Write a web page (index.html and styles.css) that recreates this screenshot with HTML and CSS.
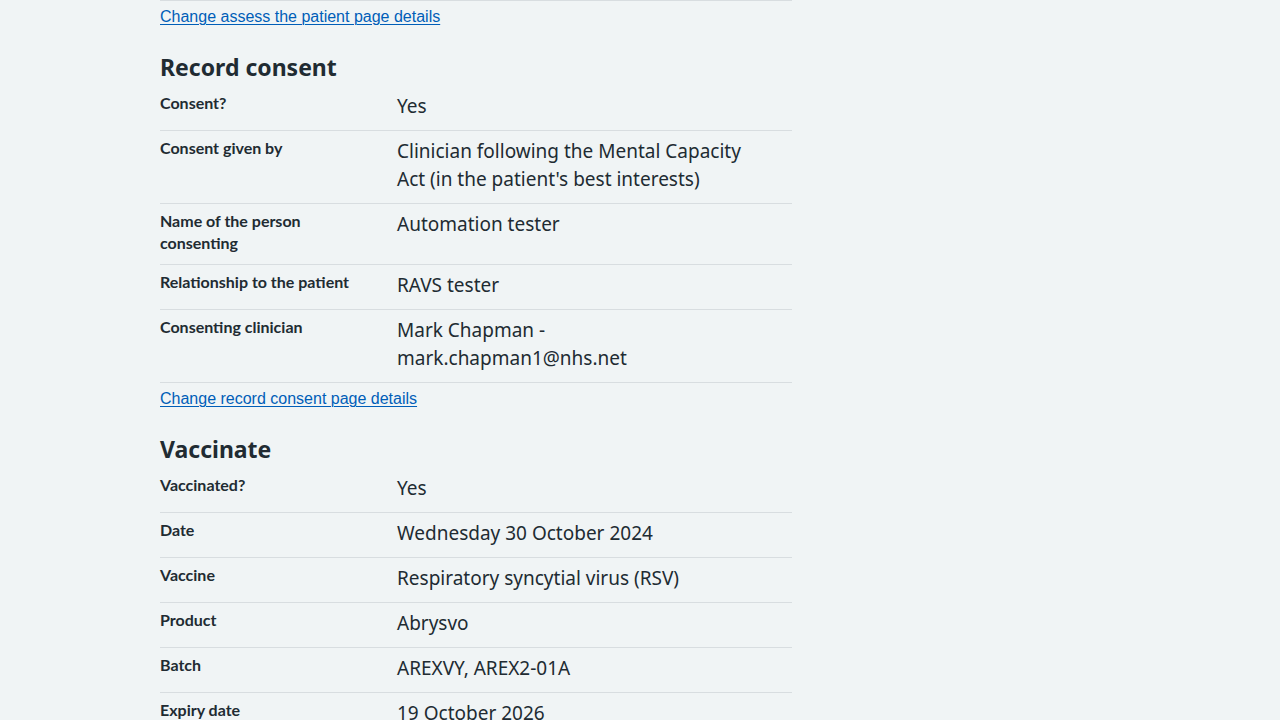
FILE: index.html
```html
<!DOCTYPE html>
<html lang="en">
<head>
<meta charset="utf-8">
<title>Check and confirm</title>
<link rel="stylesheet" href="styles.css">
</head>
<body>
<main class="page">
  <div class="section">
    <div class="top-rule"></div>
    <a class="change-link" href="#">Change assess the patient page details</a>
  </div>

  <section class="section">
    <h2 class="section-title">Record consent</h2>
    <dl class="summary">
      <div class="row"><dt class="key">Consent?</dt><dd class="value">Yes</dd></div>
      <div class="row"><dt class="key">Consent given by</dt><dd class="value">Clinician following the Mental Capacity Act (in the patient's best interests)</dd></div>
      <div class="row"><dt class="key">Name of the person consenting</dt><dd class="value">Automation tester</dd></div>
      <div class="row"><dt class="key">Relationship to the patient</dt><dd class="value">RAVS tester</dd></div>
      <div class="row"><dt class="key">Consenting clinician</dt><dd class="value">Mark Chapman - mark.chapman1@nhs.net</dd></div>
    </dl>
    <a class="change-link" href="#">Change record consent page details</a>
  </section>

  <section class="section">
    <h2 class="section-title">Vaccinate</h2>
    <dl class="summary">
      <div class="row"><dt class="key">Vaccinated?</dt><dd class="value">Yes</dd></div>
      <div class="row"><dt class="key">Date</dt><dd class="value">Wednesday 30 October 2024</dd></div>
      <div class="row"><dt class="key">Vaccine</dt><dd class="value">Respiratory syncytial virus (RSV)</dd></div>
      <div class="row"><dt class="key">Product</dt><dd class="value">Abrysvo</dd></div>
      <div class="row"><dt class="key">Batch</dt><dd class="value">AREXVY, AREX2-01A</dd></div>
      <div class="row"><dt class="key">Expiry date</dt><dd class="value">19 October 2026</dd></div>
    </dl>
  </section>
</main>
</body>
</html>
```
FILE: styles.css
```css
html, body {
  margin: 0;
  padding: 0;
  background: #f0f4f5;
  color: #212b32;
  font-family: "Noto Sans", "Liberation Sans", sans-serif;
}

.page {
  width: 632px;
  margin-left: 160px;
}

.top-rule {
  border-top: 1px solid #d8dde0;
  height: 0;
  margin-bottom: 4px;
}

.change-link {
  display: block;
  width: max-content;
  font-family: "Liberation Sans", Arial, sans-serif;
  font-size: 16px;
  line-height: 24px;
  color: #005eb8;
  text-decoration: underline;
  text-underline-offset: 2px;
  text-decoration-thickness: 1px;
}

.summary + .change-link {
  margin-top: 4px;
}

.section-title {
  margin: 22px 0 3px;
  font-size: 23px;
  line-height: 32px;
  font-weight: 700;
}

.summary {
  margin: 0;
  padding: 0;
}

.row {
  display: flex;
  border-bottom: 1px solid #d8dde0;
}

.key {
  box-sizing: border-box;
  width: 237px;
  flex: none;
  margin: 0;
  padding: 6px 24px 10px 0;
  font-family: Lato, "Noto Sans", sans-serif;
  font-size: 16px;
  line-height: 22px;
  font-weight: 700;
}

.value {
  box-sizing: border-box;
  width: 380px;
  flex: none;
  margin: 0;
  padding: 6px 24px 10px 0;
  font-size: 19px;
  line-height: 28px;
}
```
